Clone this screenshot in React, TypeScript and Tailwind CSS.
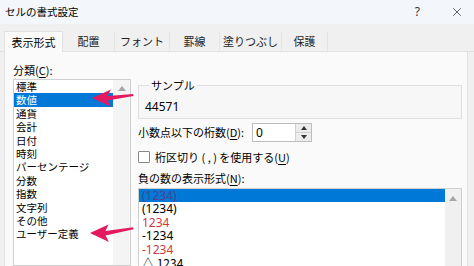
import { X } from 'lucide-react'

const jp = { fontFamily: '"Noto Sans CJK JP", "Noto Sans", sans-serif' }
const num = { fontFamily: '"Noto Sans", "Noto Sans CJK JP", sans-serif' }

const tabs = [
	{ label: '表示形式', w: 'w-[59px]' },
	{ label: '配置', w: 'w-[52px]' },
	{ label: 'フォント', w: 'w-[55px]' },
	{ label: '罫線', w: 'w-[50px]' },
	{ label: '塗りつぶし', w: 'w-[62px]' },
	{ label: '保護', w: 'w-[46px]' },
]

const categories = [
	'標準',
	'数値',
	'通貨',
	'会計',
	'日付',
	'時刻',
	'パーセンテージ',
	'分数',
	'指数',
	'文字列',
	'その他',
	'ユーザー定義',
]

const negatives = [
	{ text: '(1234)', red: true },
	{ text: '(1234)', red: false },
	{ text: '1234', red: true },
	{ text: '-1234', red: false },
	{ text: '-1234', red: true },
	{ text: '△ 1234', red: false },
]

function ScrollUp() {
	return (
		<svg width="8" height="5" viewBox="0 0 8 5">
			<path d="M0 5 L4 0 L8 5 Z" fill="#a6a6a6" />
		</svg>
	)
}

function U({ children }: { children: string }) {
	return <span className="underline underline-offset-2">{children}</span>
}

export default function App() {
	return (
		<div className="relative w-[474px] h-[266px] overflow-hidden bg-[#f0f0f0] text-black" style={jp}>
			{/* title bar */}
			<div className="h-[24px] flex items-center bg-[#f3f6fb] pl-[5px]">
				<span className="text-[10.5px] leading-none">セルの書式設定</span>
				<span className="ml-auto text-[12px] text-[#333] mr-[30px]" style={num}>?</span>
				<X size={14} strokeWidth={1.3} className="mr-[10px] text-[#333]" />
			</div>

			{/* tabs */}
			<div className="h-[28px] flex items-end pl-[4px] border-b border-[#e2e2e2]">
				{tabs.map((t, i) =>
					i === 0 ? (
						<div
							key={t.label}
							className={`${t.w} h-[21px] -mb-px flex items-center justify-center bg-[#fafafa] border border-b-0 border-[#e2e2e2] text-[11px]`}
						>
							{t.label}
						</div>
					) : (
						<div
							key={t.label}
							className={`${t.w} h-[19px] flex items-center justify-center border-r border-[#e4e4e4] text-[11px] text-[#222]`}
						>
							{t.label}
						</div>
					),
				)}
			</div>

			{/* panel */}
			<div className="ml-[4px] w-[464px] h-[214px] bg-[#fafafa] border-x border-[#e2e2e2] flex pl-[8px] pr-[5px] gap-[7px]">
				{/* left column */}
				<div className="w-[118px] pt-[12px] flex flex-col">
					<div className="h-[12px] text-[11px] leading-[12px]">
						分類(<U>C</U>):
					</div>
					<div className="mt-[3px] flex-1 border border-[#cfcfcf] bg-white flex">
						<div className="flex-1 flex flex-col">
							{categories.map((c, i) => (
								<div
									key={c}
									className={`h-[13.4px] shrink-0 overflow-hidden leading-[13.4px] pl-[2px] text-[10.5px] ${i === 1 ? 'bg-[#0078d7] text-white' : ''}`}
								>
									{c}
								</div>
							))}
						</div>
						<div className="w-[17px] bg-[#f4f4f4] flex justify-center pt-[6px]">
							<ScrollUp />
						</div>
					</div>
				</div>

				{/* right column */}
				<div className="w-[324px] pt-[27px] flex flex-col">
					<fieldset className="border border-[#e0e0e0] bg-[#f7f7f7] pl-[6px] pb-[4px]">
						<legend className="ml-[4px] px-[2px] text-[11px] leading-[12px]">サンプル</legend>
						<div className="mt-[9px] h-[14px] leading-[14px] text-[12px]" style={num}>
							44571
						</div>
					</fieldset>

					<div className="mt-[4px] flex items-center h-[19px]">
						<div className="w-[114px] text-[11px]">
							小数点以下の桁数(<U>D</U>):
						</div>
						<div className="w-[60px] h-[19px] border border-[#bdbdbd] bg-white flex">
							<div className="flex-1 pl-[3px] text-[12px] leading-[17px]" style={num}>
								0
							</div>
							<div className="w-[16px] flex flex-col border-l border-[#d0d0d0]">
								<div className="flex-1 flex items-center justify-center bg-[#ececec] border-b border-[#d0d0d0]">
									<svg width="6" height="4" viewBox="0 0 6 4">
										<path d="M0 4 L3 0 L6 4 Z" fill="#333" />
									</svg>
								</div>
								<div className="flex-1 flex items-center justify-center bg-[#ececec]">
									<svg width="6" height="4" viewBox="0 0 6 4">
										<path d="M0 0 L3 4 L6 0 Z" fill="#333" />
									</svg>
								</div>
							</div>
						</div>
					</div>

					<div className="mt-[9px] h-[12px] flex items-center gap-[5px]">
						<div className="w-[12px] h-[12px] border border-[#888] bg-white rounded-[1px]" />
						<span className="text-[11px]">
							桁区切り ( , ) を使用する(<U>U</U>)
						</span>
					</div>

					<div className="mt-[9px] h-[12px] text-[11px] leading-[12px]">
						負の数の表示形式(<U>N</U>):
					</div>

					<div className="mt-[4px] flex-1 border border-[#cfcfcf] bg-white flex">
						<div className="flex-1 flex flex-col">
							{negatives.map((n, i) => (
								<div
									key={i}
									className={`h-[13.4px] shrink-0 overflow-hidden leading-[13.4px] pl-[3px] text-[12px] ${
										i === 0 ? 'bg-[#0078d7] text-[#5a3c8e]' : n.red ? 'text-[#d03a3a]' : 'text-black'
									}`}
									style={i === 5 ? jp : num}
								>
									{n.text}
								</div>
							))}
						</div>
						<div className="w-[16px] bg-[#f0f0f0] flex justify-center pt-[7px]">
							<ScrollUp />
						</div>
					</div>
				</div>
			</div>

			{/* annotation arrows */}
			<svg className="absolute inset-0 pointer-events-none" width="474" height="266" viewBox="0 0 474 266">
				<path
					d="M92 98 L111 89.5 L107.5 96 L133 94 L133.5 96 L107.5 100.5 L111 106.5 Z"
					fill="#e5195e"
				/>
				<path
					d="M90 233 L108.5 224.5 L105.5 231 L133 227.3 L133.5 229.3 L105.5 235.5 L109 242 Z"
					fill="#e5195e"
				/>
			</svg>
		</div>
	)
}
